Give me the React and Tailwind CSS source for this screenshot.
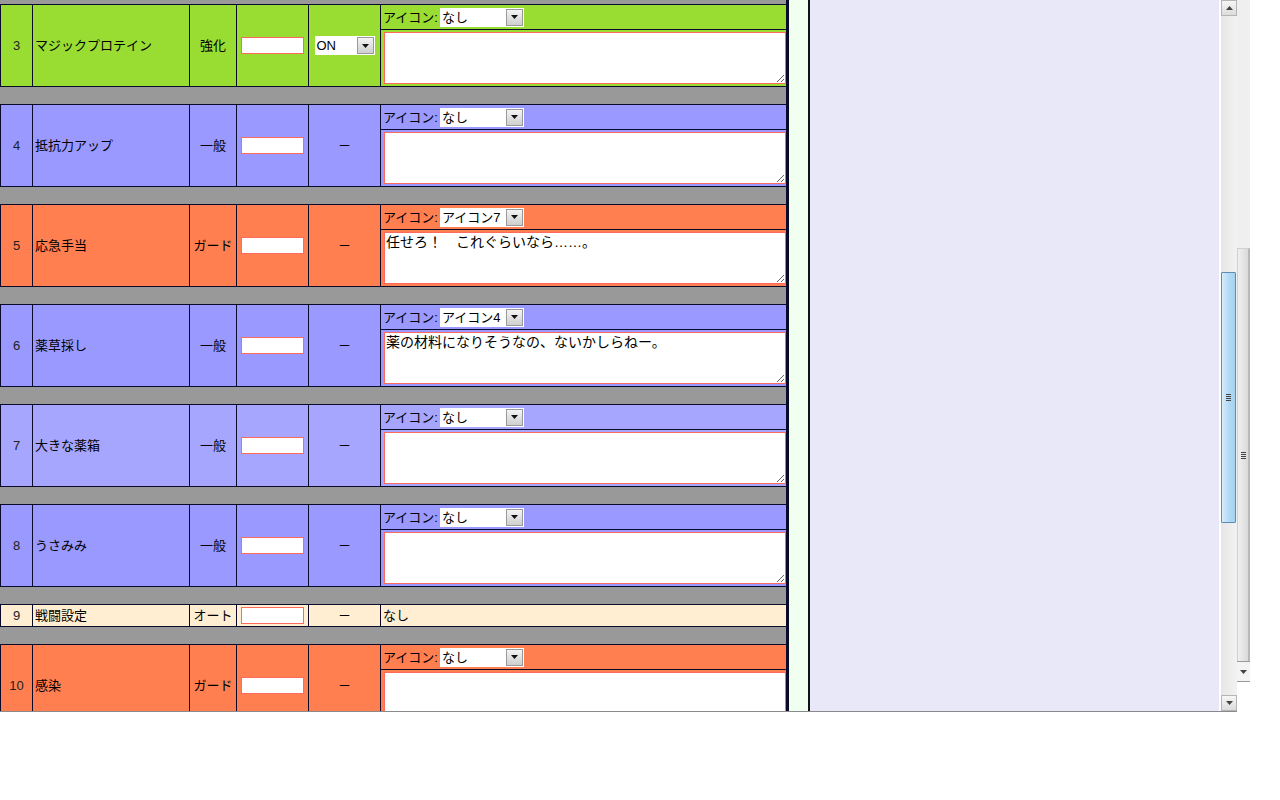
const rows = [
  { no: 3, name: 'マジックプロテイン', kind: '強化', bg: 'bg-[#99dd33]', toggle: 'ON', icon: 'なし', msg: '' },
  { no: 4, name: '抵抗力アップ', kind: '一般', bg: 'bg-[#9999ff]', icon: 'なし', msg: '' },
  { no: 5, name: '応急手当', kind: 'ガード', bg: 'bg-[#ff7f50]', icon: 'アイコン7', msg: '任せろ！　これぐらいなら……。' },
  { no: 6, name: '薬草採し', kind: '一般', bg: 'bg-[#9999ff]', icon: 'アイコン4', msg: '薬の材料になりそうなの、ないかしらねー。' },
  { no: 7, name: '大きな薬箱', kind: '一般', bg: 'bg-[#a6a6ff]', icon: 'なし', msg: '' },
  { no: 8, name: 'うさみみ', kind: '一般', bg: 'bg-[#9999ff]', icon: 'なし', msg: '' },
  { no: 9, name: '戦闘設定', kind: 'オート', bg: 'bg-[#ffeed2]', plain: 'なし' },
  { no: 10, name: '感染', kind: 'ガード', bg: 'bg-[#ff7f50]', icon: 'なし', msg: '' },
];

function DownTriangle() {
  return (
    <svg width="7" height="4" viewBox="0 0 7 4">
      <path d="M0 0h7L3.5 4z" fill="#111" />
    </svg>
  );
}

function FakeSelect({ value, width }) {
  return (
    <div className={`flex h-[19px] ${width} items-center bg-white`}>
      <span className="flex-1 pl-[2px] text-[13px] leading-none text-black whitespace-nowrap">{value}</span>
      <span className="mr-[1px] flex h-[17px] w-[17px] items-center justify-center border border-[#9a9a9a] bg-gradient-to-b from-[#f4f4f4] to-[#cfcfcf]">
        <DownTriangle />
      </span>
    </div>
  );
}

function Spacer({ h }) {
  return <div className={`${h} bg-[#999999]`} />;
}

function SkillRow({ r }) {
  const cell = 'border-r border-[#0a0a2a] flex items-center';
  const height = r.plain ? 'h-[23px]' : 'h-[83px]';
  return (
    <div className={`flex ${height} border-y border-l border-[#0a0a2a] ${r.bg} text-[13px] text-black`}>
      <div className={`${cell} w-[32px] justify-center text-[#222]`}>{r.no}</div>
      <div className={`${cell} w-[157px] pl-[2px]`}>{r.name}</div>
      <div className={`${cell} w-[47px] justify-center`}>{r.kind}</div>
      <div className={`${cell} w-[72px] justify-center`}>
        <div className="h-[17px] w-[63px] border border-[#ff6a5e] bg-white" />
      </div>
      <div className={`${cell} w-[72px] justify-center`}>
        {r.toggle ? <FakeSelect value={r.toggle} width="w-[60px]" /> : <span>－</span>}
      </div>
      {r.plain ? (
        <div className="flex w-[405px] items-center pl-[2px]">{r.plain}</div>
      ) : (
        <div className="flex w-[405px] flex-col">
          <div className="flex h-[25px] items-center border-b border-[#0a0a2a] pl-[2px]">
            <span className="mr-[2px] leading-none">アイコン:</span>
            <FakeSelect value={r.icon} width="w-[84px]" />
          </div>
          <div className="flex-1 pl-[3px] pt-[2px]">
            <textarea
              readOnly
              defaultValue={r.msg}
              className="block h-[52px] w-[402px] border border-[#ff6a5e] bg-white px-[1px] py-0 text-[14px] leading-[18px] text-black outline-none"
            />
          </div>
        </div>
      )}
    </div>
  );
}

function ScrollButton({ up }) {
  return (
    <div className="flex h-[16px] w-[16px] items-center justify-center border border-[#b5b5b5] bg-gradient-to-b from-[#f6f6f6] to-[#dcdcdc]">
      <svg width="7" height="4" viewBox="0 0 7 4">
        <path d={up ? 'M0 4h7L3.5 0z' : 'M0 0h7L3.5 4z'} fill="#444" />
      </svg>
    </div>
  );
}

function Grip() {
  return (
    <div className="flex flex-col gap-[1px]">
      <div className="h-[1px] w-[5px] bg-[#444]" />
      <div className="h-[1px] w-[5px] bg-[#444]" />
      <div className="h-[1px] w-[5px] bg-[#444]" />
      <div className="h-[1px] w-[5px] bg-[#444]" />
    </div>
  );
}

export default function App() {
  return (
    <div className="h-[800px] w-[1280px] bg-white font-['Liberation_Sans','Noto_Sans_CJK_JP',sans-serif]">
      <div className="flex h-[713px] w-[1250px] overflow-hidden">
        <div className="flex h-[712px] w-[1237px] border-b border-[#8a8a8a]">
          {/* skill list */}
          <div className="w-[789px] shrink-0 overflow-hidden border-r-[3px] border-[#0a0a2a] bg-[#999999]">
            <Spacer h="h-[4px]" />
            {rows.map((r) => (
              <div key={r.no}>
                <SkillRow r={r} />
                <Spacer h="h-[17px]" />
              </div>
            ))}
          </div>
          <div className="w-[21px] shrink-0 border-r-2 border-[#111] bg-[#f0fff0]" />
          <div className="flex-1 bg-[#e8e8f8]" />
          <div className="w-[2px] bg-white" />
          {/* inner scrollbar */}
          <div className="flex w-[16px] flex-col bg-gradient-to-r from-[#e6e6e6] to-[#f2f2f2]">
            <ScrollButton up />
            <div className="h-[256px]" />
            <div className="flex h-[251px] w-[15px] items-center justify-center rounded-[1px] border border-[#5b8db5] bg-gradient-to-r from-[#d6ecfa] via-[#b4dbf5] to-[#a6d2f0]">
              <Grip />
            </div>
            <div className="flex-1" />
            <ScrollButton />
          </div>
        </div>
        {/* outer scrollbar strip */}
        <div className="flex h-[682px] w-[13px] flex-col bg-[#efefef]">
          <div className="h-[248px]" />
          <div className="flex h-[413px] items-center justify-center border-t border-l border-[#d0d0d0] border-r-2 border-r-[#b8b8b8] bg-gradient-to-r from-[#f0f0f0] to-[#dadada]">
            <Grip />
          </div>
          <div className="flex h-[21px] items-center justify-center border-t border-b border-[#9a9a9a] bg-[#f4f4f4]">
            <svg width="7" height="4" viewBox="0 0 7 4">
              <path d="M0 0h7L3.5 4z" fill="#444" />
            </svg>
          </div>
        </div>
      </div>
    </div>
  );
}
